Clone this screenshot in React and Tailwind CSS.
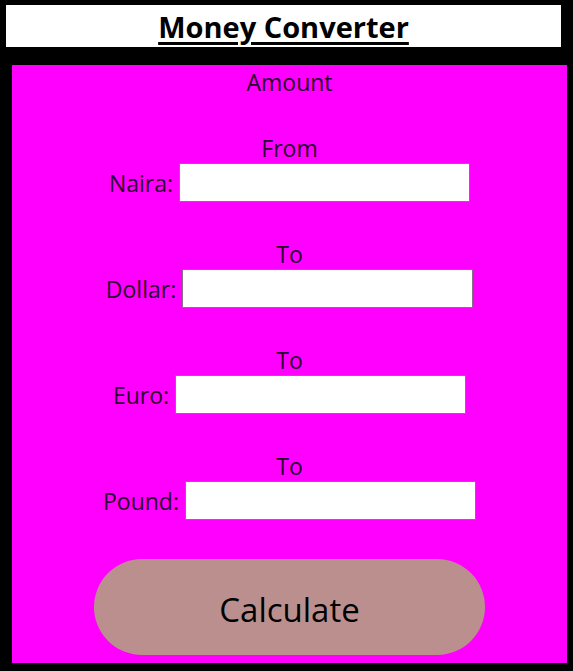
import React, { useState } from 'react';

const font = { fontFamily: '"Open Sans", "Noto Sans", sans-serif' };

const Row = ({ caption, label, name, value, onChange }) => (
  <div className="flex flex-col items-center">
    <p className="h-[30px] leading-[30px] text-[23px]">{caption}</p>
    <label className="flex items-center gap-[6px] text-[23px] leading-[30px]">
      {label}:
      <input
        type="text"
        name={name}
        value={value}
        onChange={onChange}
        className="w-[291px] h-[39px] bg-white border border-[#857085] px-1 text-black focus:outline-none"
      />
    </label>
  </div>
);

const App = () => {
  const [form, setForm] = useState({ naira: '', dollar: '', euro: '', pound: '' });

  const handleChange = (e) => {
    setForm({ ...form, [e.target.name]: e.target.value });
  };

  return (
    <div className="w-[573px] h-[671px] bg-black pt-[5px] overflow-hidden" style={font}>
      <header className="ml-[6px] w-[555px] h-[42px] bg-white flex items-center justify-center">
        <h1 className="text-[29px] font-bold underline underline-offset-[4px] decoration-[3px] text-black leading-none">
          Money Converter
        </h1>
      </header>
      <main className="ml-[12px] mt-[18px] w-[555px] h-[598px] bg-[#ff00ff] text-[#2a002e] flex flex-col items-center pt-[2px]">
        <p className="h-[30px] leading-[30px] text-[23px]">Amount</p>
        <div className="mt-[36px] flex flex-col gap-[37px]">
          <Row caption="From" label="Naira" name="naira" value={form.naira} onChange={handleChange} />
          <Row caption="To" label="Dollar" name="dollar" value={form.dollar} onChange={handleChange} />
          <Row caption="To" label="Euro" name="euro" value={form.euro} onChange={handleChange} />
          <Row caption="To" label="Pound" name="pound" value={form.pound} onChange={handleChange} />
        </div>
        <button className="mt-[39px] w-[391px] h-[96px] rounded-full bg-[#bc8f8f] text-black text-[33px] pt-[5px]">
          Calculate
        </button>
      </main>
    </div>
  );
};

export default App;
